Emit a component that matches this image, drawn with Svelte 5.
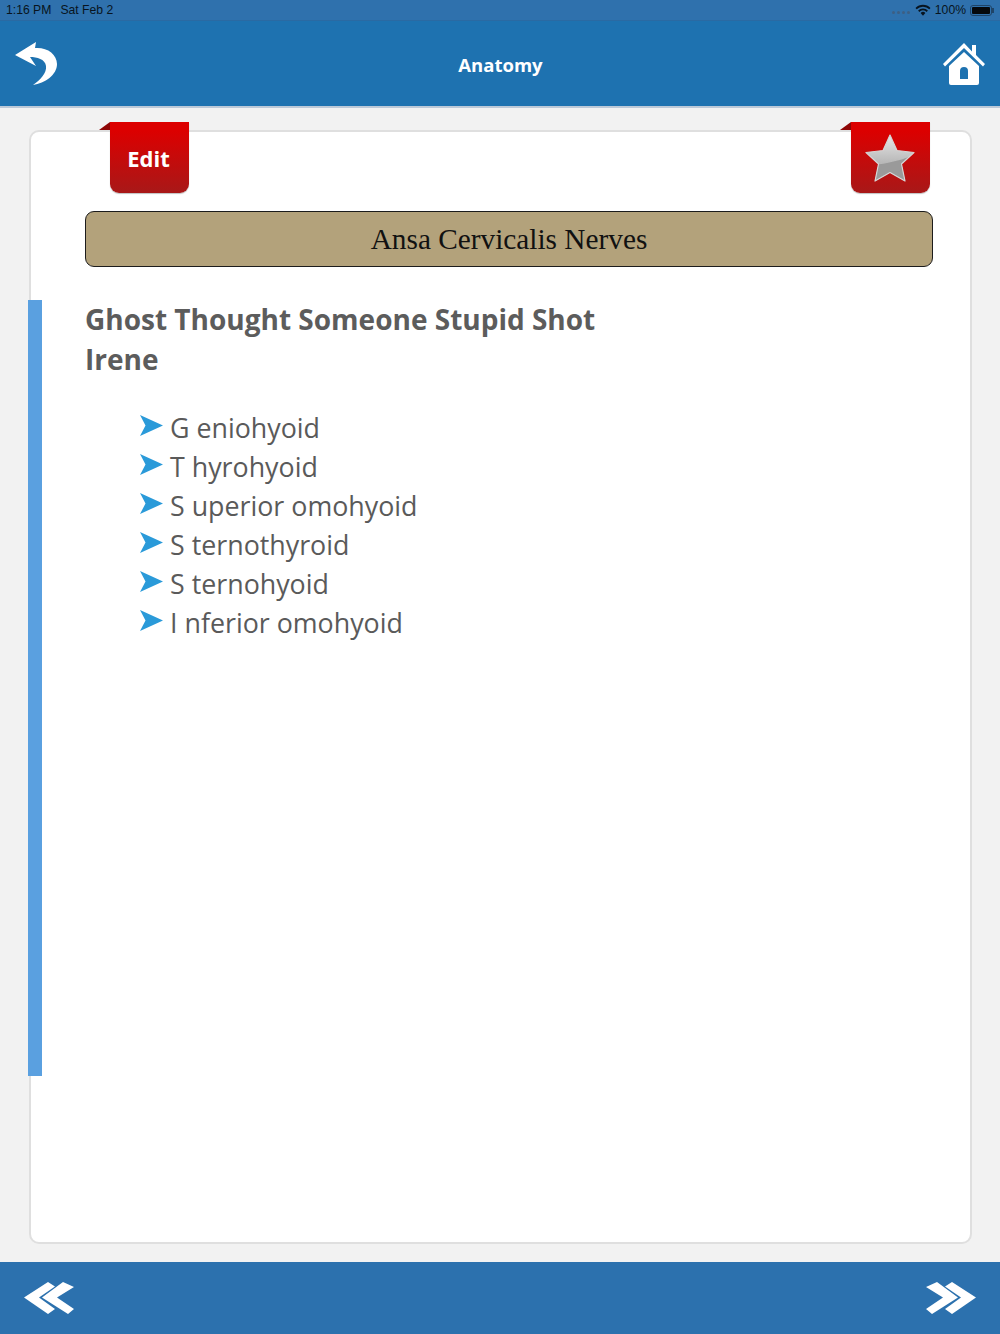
<script>
  const muscles = [
    ['G', 'eniohyoid'],
    ['T', 'hyrohyoid'],
    ['S', 'uperior omohyoid'],
    ['S', 'ternothyroid'],
    ['S', 'ternohyoid'],
    ['I', 'nferior omohyoid']
  ];
</script>

<div class="screen">
  <div class="status">
    <span>1:16 PM</span>
    <span class="date">Sat Feb 2</span>
    <span class="status-right">
      <span class="dots"><i></i><i></i><i></i><i></i></span>
      <svg width="16" height="12" viewBox="0 0 16 12" aria-hidden="true">
        <path d="M0.500 4a10.500 10.500 0 0 1 15 0l-1.200 1.300a8.800 8.800 0 0 0-12.600 0z" fill="#081420"/>
        <path d="M3.100 6.600a6.800 6.800 0 0 1 9.800 0l-1.200 1.300a5 5 0 0 0-7.400 0z" fill="#081420"/>
        <path d="M5.600 9.100a3.300 3.300 0 0 1 4.800 0L8 11.800z" fill="#081420"/>
      </svg>
      <span>100%</span>
      <span class="battery"><span class="battery-fill"></span></span>
    </span>
  </div>

  <header class="nav">
    <svg class="back" width="44" height="44" viewBox="0 0 44 44" aria-hidden="true">
      <path d="M21 0 L0 13 L21 24 L15 15 C22 15 30 17 31 24 C32 31 25 38 18 43 C30 41 42 33 42 22 C42 12 32 5 20 6 Z" fill="#fff"/>
    </svg>
    <h1>Anatomy</h1>
    <svg class="home" width="44" height="44" viewBox="0 0 44 44" aria-hidden="true">
      <path d="M1 22 L22 1 L30 9.500 V3 H34 V13 L43 22 L41 24.500 L22 6 L3 24.500 Z" fill="#fff"/>
      <path fill-rule="evenodd" d="M7 24 L22 10 L37 24 V41 Q37 43 35 43 H9 Q7 43 7 41 Z M18 37 H26 V29 Q26 25 22 25 Q18 25 18 29 Z" fill="#fff"/>
    </svg>
  </header>

  <main class="main">
    <section class="card">
      <div class="rail"></div>

      <div class="ribbon ribbon-edit">
        <span class="fold"></span>
        <span>Edit</span>
      </div>
      <div class="ribbon ribbon-star">
        <span class="fold"></span>
        <svg width="54" height="50" viewBox="0 0 54 50" aria-hidden="true">
          <defs>
            <linearGradient id="starTop" x1="0" y1="0" x2="0" y2="1">
              <stop offset="0" stop-color="#e8e8e8"/>
              <stop offset="0.6" stop-color="#b8b8b8"/>
            </linearGradient>
            <clipPath id="starClip">
              <path d="M27 2 L34 17.500 L51 19.500 L38.500 31 L42 48 L27 39.500 L12 48 L15.500 31 L3 19.500 L20 17.500 Z"/>
            </clipPath>
          </defs>
          <path d="M27 2 L34 17.500 L51 19.500 L38.500 31 L42 48 L27 39.500 L12 48 L15.500 31 L3 19.500 L20 17.500 Z" fill="url(#starTop)"/>
          <path d="M0 34 C16 31 36 30 54 20 V50 H0 Z" fill="#9a9a9a" clip-path="url(#starClip)"/>
          <path d="M27 2 L34 17.500 L51 19.500 L38.500 31 L42 48 L27 39.500 L12 48 L15.500 31 L3 19.500 L20 17.500 Z" fill="none" stroke="#d6d6d6" stroke-width="1.200" stroke-linejoin="round"/>
        </svg>
      </div>

      <div class="title-bar">Ansa Cervicalis Nerves</div>

      <h2>Ghost Thought Someone Stupid Shot<br />Irene</h2>

      <ul>
        {#each muscles as [first, rest]}
          <li>
            <svg width="24" height="22" viewBox="0 0 24 22" aria-hidden="true">
              <path d="M1 0 L24 10.500 L1 21 L6.500 10.500 Z" fill="#2a9ad9"/>
            </svg>
            <span>{first} {rest}</span>
          </li>
        {/each}
      </ul>
    </section>
  </main>

  <footer class="footer">
    <svg width="52" height="34" viewBox="0 0 52 34" aria-hidden="true">
      <path d="M0 16.500 L24 1 L31 5.500 L15 16.500 L31 28 L24 33 Z" fill="#fff"/>
      <path d="M18 16.500 L39 1 L50 6 L33 16.500 L50 28 L44 33 Z" fill="#fff"/>
    </svg>
    <svg width="52" height="34" viewBox="0 0 52 34" aria-hidden="true">
      <path d="M52 16.500 L28 1 L21 5.500 L37 16.500 L21 28 L28 33 Z" fill="#fff"/>
      <path d="M34 16.500 L13 1 L2 6 L19 16.500 L2 28 L8 33 Z" fill="#fff"/>
    </svg>
  </footer>
</div>

<style>
  :global(body) {
    margin: 0;
  }
  .screen {
    width: 1000px;
    height: 1334px;
    display: flex;
    flex-direction: column;
    background: #f2f2f2;
    font-family: "Open Sans", "Noto Sans", sans-serif;
    overflow: hidden;
  }
  .status {
    height: 20px;
    flex-shrink: 0;
    display: flex;
    align-items: center;
    padding: 0 8px 0 6px;
    background: #2f71ad;
    color: #081420;
    font-family: "Liberation Sans", sans-serif;
    font-size: 12.200px;
    box-sizing: border-box;
  }
  .date {
    margin-left: 9px;
  }
  .status-right {
    margin-left: auto;
    display: flex;
    align-items: center;
    gap: 4px;
  }
  .dots {
    display: flex;
    gap: 2px;
    margin: 5px 1px 0 0;
  }
  .dots i {
    width: 3px;
    height: 3px;
    border-radius: 50%;
    background: #3d5f84;
  }
  .battery {
    position: relative;
    width: 22px;
    height: 11px;
    border: 1px solid #1f4468;
    border-radius: 3px;
    padding: 1px;
    box-sizing: border-box;
    display: flex;
  }
  .battery::after {
    content: "";
    position: absolute;
    right: -3px;
    top: 2px;
    width: 2px;
    height: 5px;
    background: #1f4468;
  }
  .battery-fill {
    flex: 1;
    background: #05080c;
    border-radius: 1px;
  }
  .nav {
    height: 88px;
    flex-shrink: 0;
    box-sizing: border-box;
    display: flex;
    align-items: center;
    justify-content: space-between;
    padding: 1px 14px 0 15px;
    background: #1e72b0;
    border-top: 1px solid #2a6aa3;
    border-bottom: 2px solid #bcc9d8;
  }
  .nav h1 {
    margin: 0;
    font-size: 18.500px;
    font-weight: 700;
    color: #fff;
  }
  .main {
    flex: 1;
    min-height: 0;
    display: flex;
    padding: 22px 28px 18px 29px;
  }
  .card {
    flex: 1;
    position: relative;
    box-sizing: border-box;
    padding: 79px 37px 0 54px;
    background: #fff;
    border: 2px solid #dfdfdf;
    border-radius: 10px;
  }
  .rail {
    position: absolute;
    left: -3px;
    top: 168px;
    width: 14px;
    height: 776px;
    background: #5aa0e0;
  }
  .ribbon {
    position: absolute;
    top: -10px;
    width: 79px;
    height: 71px;
    display: flex;
    align-items: center;
    justify-content: center;
    padding-right: 2px;
    box-sizing: border-box;
    color: #fff;
    font-size: 22px;
    font-weight: 700;
    background: linear-gradient(#dc0000 12%, #a81818 100%);
    border-radius: 0 0 9px 9px;
    box-shadow: 0 1px 1px rgba(0, 0, 0, 0.25);
  }
  .fold {
    position: absolute;
    left: -11px;
    top: 0;
    width: 0;
    height: 0;
    border-style: solid;
    border-width: 0 0 8px 11px;
    border-color: transparent transparent #8e0505 transparent;
  }
  .ribbon-edit {
    left: 79px;
  }
  .ribbon-star {
    right: 40px;
  }
  .title-bar {
    height: 56px;
    box-sizing: border-box;
    display: flex;
    align-items: center;
    justify-content: center;
    background: #b3a27b;
    border: 1px solid #1c1c1c;
    border-radius: 9px;
    font-family: "Liberation Serif", serif;
    font-size: 29.300px;
    color: #111;
  }
  h2 {
    margin: 32px 0 0;
    font-size: 28px;
    line-height: 40px;
    font-weight: 700;
    color: #5c5c5c;
  }
  ul {
    list-style: none;
    margin: 29px 0 0;
    padding: 0 0 0 54px;
  }
  li {
    height: 39px;
    display: flex;
    align-items: center;
    gap: 7px;
    font-size: 26.800px;
    color: #5a5a5a;
  }
  li svg {
    margin-top: -4px;
    flex-shrink: 0;
  }
  .footer {
    height: 72px;
    flex-shrink: 0;
    box-sizing: border-box;
    display: flex;
    align-items: center;
    justify-content: space-between;
    padding: 0 24px;
    background: #2c71ae;
  }
</style>
